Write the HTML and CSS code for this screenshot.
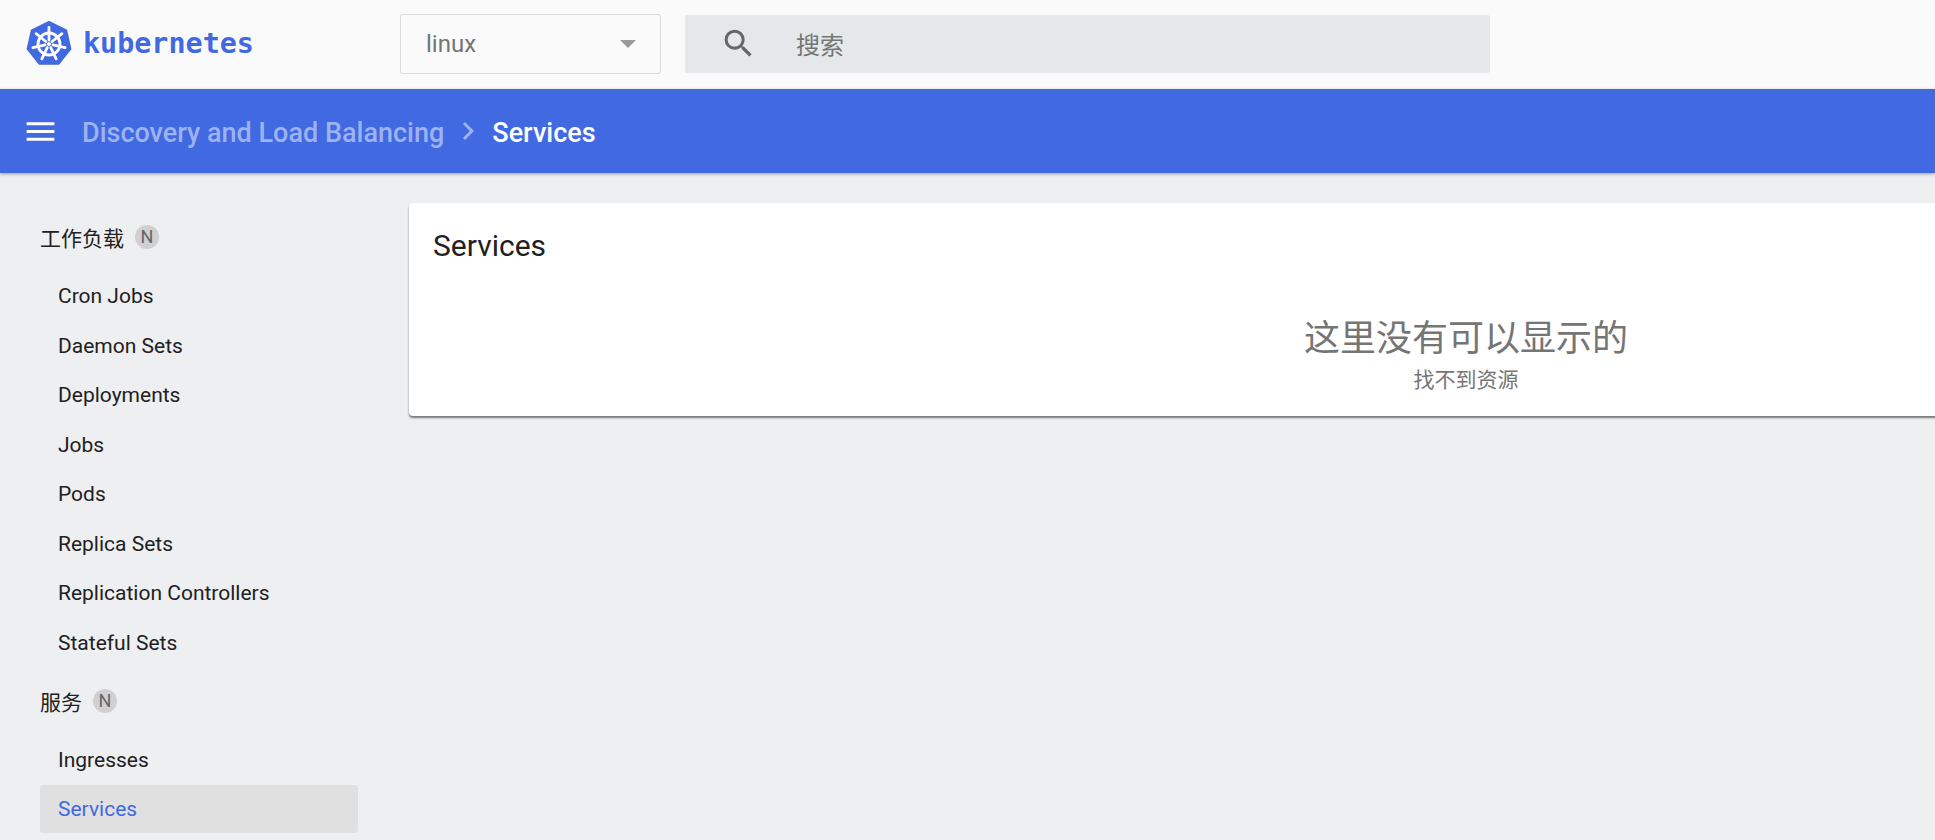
FILE: index.html
```html
<!DOCTYPE html>
<html lang="zh-CN">
<head>
    <meta charset="UTF-8">
    <meta name="viewport" content="width=device-width, initial-scale=1.0">
    <title>Services - Kubernetes Dashboard</title>
    <link rel="stylesheet" href="styles.css">
</head>
<body>
    <header class="topbar">
        <a class="brand">
            <svg class="brand-logo" viewBox="-24 -24 48 48" aria-hidden="true">
                <path class="logo-shape" d="M0-22 17.2-13.7 21.4 4.9 9.5 19.8H-9.5L-21.4 4.9-17.2-13.7Z"/>
                <circle class="logo-line" r="11"/>
                <circle class="logo-hub" r="2"/>
                <g class="logo-line">
                    <path d="M0-4V-16.5"/>
                    <path d="M0-4V-16.5" transform="rotate(51.43)"/>
                    <path d="M0-4V-16.5" transform="rotate(102.86)"/>
                    <path d="M0-4V-16.5" transform="rotate(154.29)"/>
                    <path d="M0-4V-16.5" transform="rotate(205.71)"/>
                    <path d="M0-4V-16.5" transform="rotate(257.14)"/>
                    <path d="M0-4V-16.5" transform="rotate(308.57)"/>
                </g>
            </svg>
            <span class="brand-name">kubernetes</span>
        </a>
        <div class="namespace-select">
            <span>linux</span>
            <i class="select-arrow"></i>
        </div>
        <div class="search-box">
            <svg class="search-icon" viewBox="0 0 24 24" aria-hidden="true">
                <path d="M15.5 14h-.79l-.28-.27A6.47 6.47 0 0 0 16 9.5 6.5 6.5 0 1 0 9.5 16c1.61 0 3.09-.59 4.23-1.57l.27.28v.79l5 4.99L20.49 19l-4.99-5zm-6 0C7.01 14 5 11.99 5 9.5S7.01 5 9.5 5 14 7.01 14 9.5 11.99 14 9.5 14z"/>
            </svg>
            <span class="search-placeholder">搜索</span>
        </div>
    </header>

    <nav class="toolbar">
        <svg class="menu-icon" viewBox="0 0 24 24" aria-hidden="true">
            <path d="M3 18h18v-2H3v2zm0-5h18v-2H3v2zm0-7v2h18V6H3z"/>
        </svg>
        <span class="crumb-parent">Discovery and Load Balancing</span>
        <svg class="crumb-chevron" viewBox="0 0 24 24" aria-hidden="true">
            <path d="M10 6 8.59 7.41 13.17 12l-4.58 4.59L10 18l6-6z"/>
        </svg>
        <span class="crumb-current">Services</span>
    </nav>

    <div class="layout">
        <aside class="sidebar">
            <div class="nav-section">工作负载 <span class="nav-badge">N</span></div>
            <ul class="nav-list">
                <li class="nav-item">Cron Jobs</li>
                <li class="nav-item">Daemon Sets</li>
                <li class="nav-item">Deployments</li>
                <li class="nav-item">Jobs</li>
                <li class="nav-item">Pods</li>
                <li class="nav-item">Replica Sets</li>
                <li class="nav-item">Replication Controllers</li>
                <li class="nav-item">Stateful Sets</li>
            </ul>
            <div class="nav-section">服务 <span class="nav-badge">N</span></div>
            <ul class="nav-list">
                <li class="nav-item">Ingresses</li>
                <li class="nav-item active">Services</li>
            </ul>
        </aside>

        <main class="content">
            <section class="card">
                <h2 class="card-title">Services</h2>
                <div class="empty-state">
                    <div class="empty-title">这里没有可以显示的</div>
                    <div class="empty-text">找不到资源</div>
                </div>
            </section>
        </main>
    </div>
</body>
</html>
```

FILE: styles.css
```css
html, body {
    height: 840px;
    overflow: hidden;
}
body {
    margin: 0;
    background-color: #eeeff1;
    font-family: Roboto, "Noto Sans CJK SC", sans-serif;
    color: #212121;
}
.topbar {
    display: flex;
    align-items: center;
    height: 89px;
    padding-bottom: 2px;
    box-sizing: border-box;
    background-color: #fafafa;
}
.brand {
    display: flex;
    align-items: center;
    width: 400px;
    padding-left: 25px;
    box-sizing: border-box;
}
.brand-logo {
    width: 48px;
    height: 48px;
}
.logo-shape {
    fill: #4169e1;
    stroke: #4169e1;
    stroke-width: 2;
    stroke-linejoin: round;
}
.logo-line {
    fill: none;
    stroke: #fff;
    stroke-width: 2.8;
    stroke-linecap: round;
}
.logo-hub {
    fill: #fff;
}
.brand-name {
    margin-left: 10px;
    font-family: "DejaVu Sans Mono", monospace;
    font-size: 28.4px;
    font-weight: bold;
    color: #4169e1;
}
.namespace-select {
    display: flex;
    align-items: center;
    justify-content: space-between;
    width: 261px;
    height: 60px;
    padding: 0 24px 0 25px;
    box-sizing: border-box;
    border: 1px solid #dcdcdc;
    border-radius: 3px;
    font-size: 24px;
    color: #757575;
}
.select-arrow {
    width: 0;
    height: 0;
    border-left: 8px solid transparent;
    border-right: 8px solid transparent;
    border-top: 8px solid #999;
}
.search-box {
    display: flex;
    align-items: center;
    width: 805px;
    height: 58px;
    margin-left: 24px;
    padding-left: 35px;
    box-sizing: border-box;
    background-color: #e5e8e8;
    border-radius: 3px;
}
.search-icon {
    width: 37px;
    height: 37px;
    fill: #666;
}
.search-placeholder {
    margin-left: 39px;
    font-size: 24px;
    color: #757575;
}
.toolbar {
    display: flex;
    align-items: center;
    height: 84px;
    padding: 3px 0 0 22px;
    box-sizing: border-box;
    background-color: #4169e1;
    box-shadow: 0 1px 3px rgba(0, 0, 0, 0.35);
    font-size: 27px;
    font-weight: 500;
    color: #fff;
    position: relative;
}
.menu-icon {
    width: 37px;
    height: 37px;
    margin-top: -3px;
    fill: #fff;
}
.crumb-parent {
    margin-left: 23px;
    color: #9db2f0;
}
.crumb-chevron {
    width: 36px;
    height: 36px;
    margin: -3px 6px 0;
    fill: #9db2f0;
}
.layout {
    display: flex;
}
.sidebar {
    flex: none;
    width: 409px;
    height: 667px;
    padding: 30px 0 0 40px;
    box-sizing: border-box;
}
.nav-section {
    display: flex;
    align-items: center;
    gap: 11px;
    height: 48px;
    margin: 10px 0 11px;
    font-size: 21px;
}
.nav-badge {
    width: 24px;
    height: 24px;
    border-radius: 50%;
    background-color: #d0d0d0;
    color: #666;
    font-size: 18px;
    line-height: 24px;
    text-align: center;
}
.nav-list {
    margin: 0;
    padding: 0;
    list-style: none;
}
.nav-item {
    display: flex;
    align-items: center;
    width: 318px;
    height: 48px;
    margin-bottom: 1.5px;
    padding-left: 18px;
    box-sizing: border-box;
    border-radius: 3px;
    font-size: 21px;
}
.nav-item.active {
    background-color: #e0e0e0;
    color: #4169e1;
}
.content {
    flex: none;
    width: 2114px;
    padding-top: 30px;
}
.card {
    height: 213px;
    padding: 25px 24px 0;
    box-sizing: border-box;
    background-color: #fff;
    border-radius: 4px;
    box-shadow: 0 2px 2px rgba(0, 0, 0, 0.5);
}
.card-title {
    margin: 0;
    font-size: 30px;
    font-weight: 400;
    line-height: 36px;
}
.empty-state {
    margin-top: 50px;
    text-align: center;
    color: #757575;
}
.empty-title {
    font-size: 36px;
    line-height: 51px;
}
.empty-text {
    font-size: 21px;
    line-height: 30px;
}
```
